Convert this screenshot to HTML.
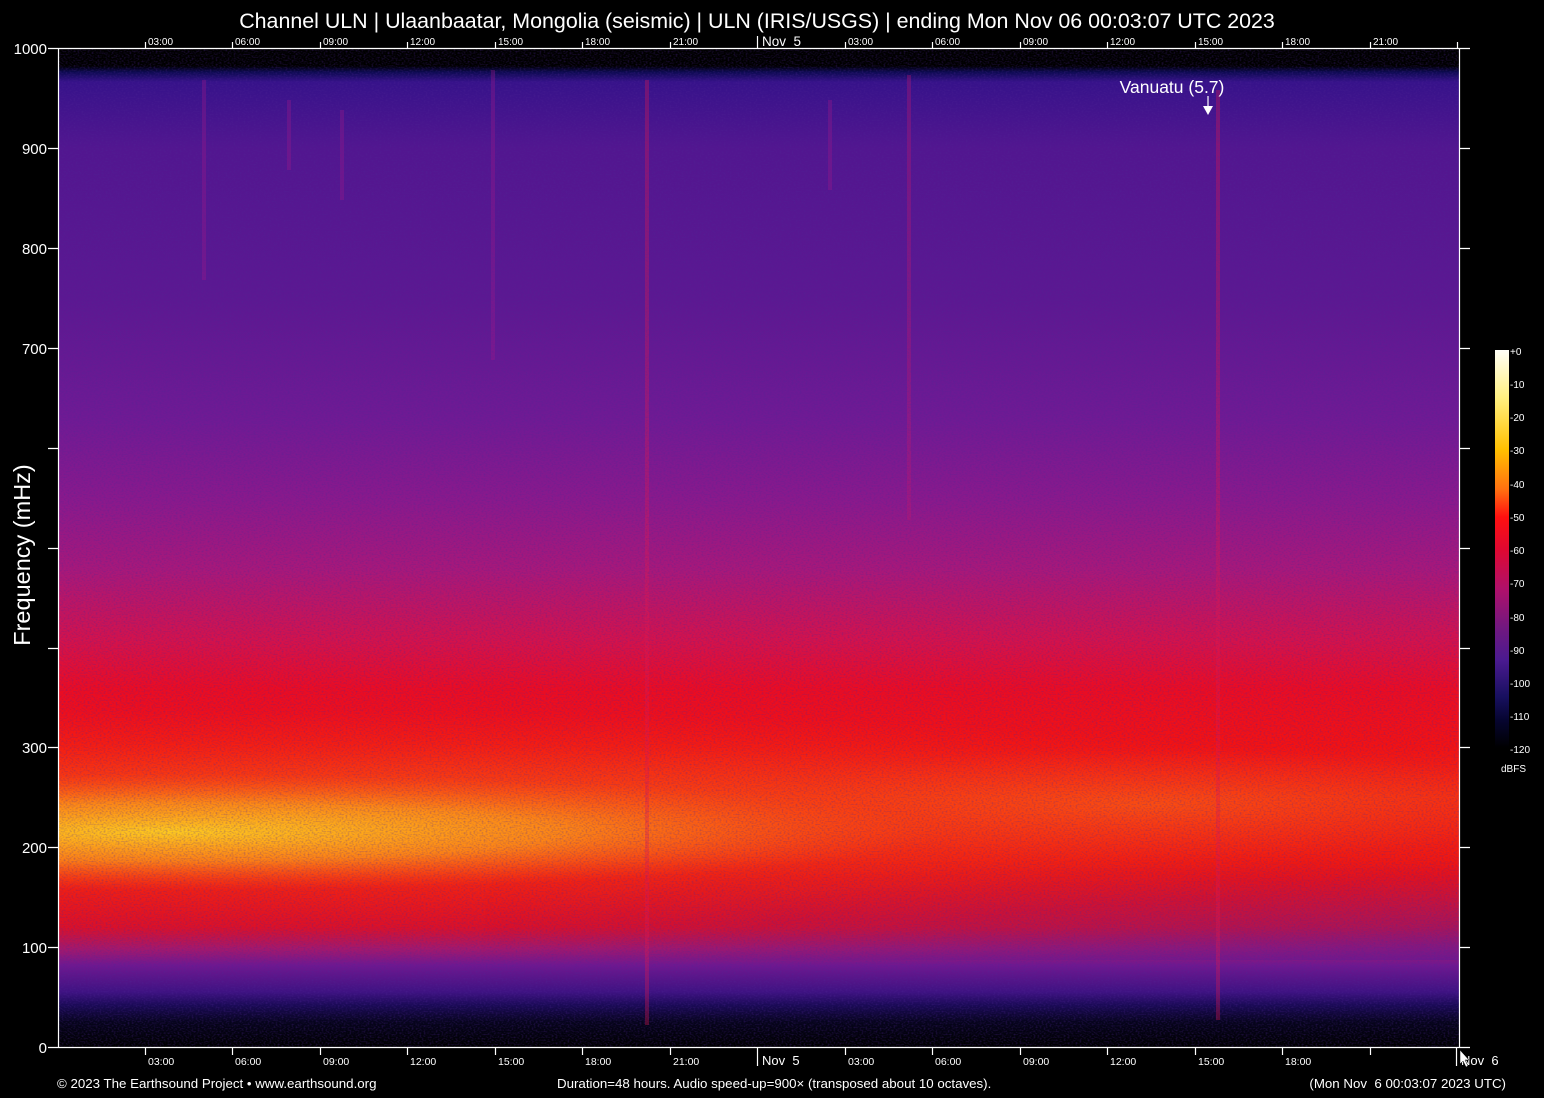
<!DOCTYPE html>
<html><head><meta charset="utf-8"><style>
html,body{margin:0;padding:0;background:#000;width:1544px;height:1098px;overflow:hidden}
svg{display:block}
text{font-family:"Liberation Sans",sans-serif;fill:#fff}
</style></head><body>
<svg width="1544" height="1098" viewBox="0 0 1544 1098" xmlns="http://www.w3.org/2000/svg">
<defs>
<linearGradient id="v" x1="0" y1="48" x2="0" y2="1047" gradientUnits="userSpaceOnUse">
<stop offset="0" stop-color="#000"/>
<stop offset="0.018" stop-color="#000"/>
<stop offset="0.024" stop-color="#0c0a50"/>
<stop offset="0.034" stop-color="#36128a"/>
<stop offset="0.10" stop-color="#521690"/>
<stop offset="0.25" stop-color="#5c1892"/>
<stop offset="0.372" stop-color="#701a94"/>
<stop offset="0.452" stop-color="#8a198c"/>
<stop offset="0.522" stop-color="#a8187a"/>
<stop offset="0.592" stop-color="#d4124c"/>
<stop offset="0.642" stop-color="#ec0c22"/>
<stop offset="0.70" stop-color="#f41212"/>
<stop offset="0.75" stop-color="#f62a10"/>
<stop offset="0.83" stop-color="#f01010"/>
<stop offset="0.88" stop-color="#dc1028"/>
<stop offset="0.902" stop-color="#a4186c"/>
<stop offset="0.918" stop-color="#701890"/>
<stop offset="0.945" stop-color="#3e1282"/>
<stop offset="0.958" stop-color="#1a0a56"/>
<stop offset="0.975" stop-color="#06041c"/>
<stop offset="1" stop-color="#000"/>
</linearGradient>
<radialGradient id="y1" cx="170" cy="832" r="1" gradientUnits="userSpaceOnUse" gradientTransform="translate(170 832) scale(780 58) translate(-170 -832)">
<stop offset="0" stop-color="#ffd020" stop-opacity="0.95"/>
<stop offset="0.5" stop-color="#ffa818" stop-opacity="0.65"/>
<stop offset="1" stop-color="#ff6010" stop-opacity="0"/>
</radialGradient>
<radialGradient id="o1" cx="300" cy="820" r="1" gradientUnits="userSpaceOnUse" gradientTransform="translate(300 820) scale(1300 110) translate(-300 -820)">
<stop offset="0" stop-color="#ff7010" stop-opacity="0.75"/>
<stop offset="1" stop-color="#ff3010" stop-opacity="0"/>
</radialGradient>
<radialGradient id="o2" cx="1150" cy="805" r="1" gradientUnits="userSpaceOnUse" gradientTransform="translate(1150 805) scale(450 55) translate(-1150 -805)">
<stop offset="0" stop-color="#ff6a10" stop-opacity="0.5"/>
<stop offset="1" stop-color="#ff4010" stop-opacity="0"/>
</radialGradient>
<linearGradient id="rb" x1="0" y1="860" x2="0" y2="960" gradientUnits="userSpaceOnUse">
<stop offset="0" stop-color="#7a1a90" stop-opacity="0"/>
<stop offset="1" stop-color="#6a1890" stop-opacity="0.7"/>
</linearGradient>
<linearGradient id="rbh" x1="59" y1="0" x2="1459" y2="0" gradientUnits="userSpaceOnUse">
<stop offset="0.3" stop-color="#fff" stop-opacity="0"/>
<stop offset="1" stop-color="#fff" stop-opacity="1"/>
</linearGradient>
<mask id="m"><rect x="59" y="860" width="1400" height="100" fill="url(#rbh)"/></mask>
<filter id="n" x="0" y="0" width="100%" height="100%">
<feTurbulence type="fractalNoise" baseFrequency="0.5 0.7" numOctaves="1" seed="3"/>
<feColorMatrix values="0 0 0 0 0.08  0 0 0 0 0.02  0 0 0 0 0.3  0 0 0 -2.2 1.25"/>
</filter>
<linearGradient id="cb" x1="0" y1="350" x2="0" y2="748" gradientUnits="userSpaceOnUse">
<stop offset="0" stop-color="#fffff8"/>
<stop offset="0.12" stop-color="#fff080"/>
<stop offset="0.25" stop-color="#ffc000"/>
<stop offset="0.35" stop-color="#ff7010"/>
<stop offset="0.42" stop-color="#ff1010"/>
<stop offset="0.5" stop-color="#e00830"/>
<stop offset="0.6" stop-color="#b0106a"/>
<stop offset="0.7" stop-color="#701880"/>
<stop offset="0.78" stop-color="#4a1a90"/>
<stop offset="0.87" stop-color="#181060"/>
<stop offset="0.93" stop-color="#060530"/>
<stop offset="1" stop-color="#000"/>
</linearGradient>
</defs>

<text x="757" y="28" font-size="21.4" text-anchor="middle">Channel ULN | Ulaanbaatar, Mongolia (seismic) | ULN (IRIS/USGS) | ending Mon Nov 06 00:03:07 UTC 2023</text>

<rect x="59" y="48" width="1400" height="999" fill="url(#v)"/>
<rect x="59" y="48" width="1400" height="999" fill="url(#o1)"/>
<rect x="59" y="48" width="1400" height="999" fill="url(#o2)"/>
<rect x="59" y="48" width="1400" height="999" fill="url(#y1)"/>
<rect x="59" y="860" width="1400" height="100" fill="url(#rb)" mask="url(#m)"/>
<g stroke-width="4" opacity="0.35">
<line x1="647" y1="80" x2="647" y2="1025" stroke="#e01850"/>
<line x1="909" y1="75" x2="909" y2="520" stroke="#c01870"/>
<line x1="1218" y1="90" x2="1218" y2="1020" stroke="#e01850"/>
<line x1="493" y1="70" x2="493" y2="360" stroke="#a0188a"/>
<line x1="204" y1="80" x2="204" y2="280" stroke="#a0188a"/>
<line x1="342" y1="110" x2="342" y2="200" stroke="#a0188a"/>
<line x1="289" y1="100" x2="289" y2="170" stroke="#a0188a"/>
<line x1="830" y1="100" x2="830" y2="190" stroke="#a0188a"/>
</g>
<rect x="59" y="48" width="1400" height="999" filter="url(#n)" opacity="0.4"/>

<g stroke="#fff" stroke-width="1.2" fill="none">
<line x1="58.5" y1="48" x2="58.5" y2="1048"/>
<line x1="58" y1="48.5" x2="1470" y2="48.5"/>
<line x1="58" y1="1047.5" x2="1470" y2="1047.5"/>
<line x1="1459.5" y1="48" x2="1459.5" y2="1048"/>
<path d="M48 48.5h10M48 148.5h10M48 248.5h10M48 348.5h10M48 448.5h10M48 548.5h10M48 648.5h10M48 747.5h10M48 847.5h10M48 947.5h10M48 1047.5h10"/>
<path d="M1460 148.5h10M1460 248.5h10M1460 348.5h10M1460 448.5h10M1460 548.5h10M1460 648.5h10M1460 747.5h10M1460 847.5h10M1460 947.5h10"/>
<path d="M145.5 42v6M232.5 42v6M320.5 42v6M407.5 42v6M495.5 42v6M582.5 42v6M670.5 42v6M757.5 36v12M845.5 42v6M932.5 42v6M1020.5 42v6M1107.5 42v6M1195.5 42v6M1282.5 42v6M1370.5 42v6M1457.5 42v6"/>
<path d="M145.5 1048v7M232.5 1048v7M320.5 1048v7M407.5 1048v7M495.5 1048v7M582.5 1048v7M670.5 1048v7M757.5 1048v18M845.5 1048v7M932.5 1048v7M1020.5 1048v7M1107.5 1048v7M1195.5 1048v7M1282.5 1048v7M1370.5 1048v7M1456.5 1048v18"/>
</g>

<g font-size="15" text-anchor="end">
<text x="47" y="54">1000</text><text x="47" y="154">900</text><text x="47" y="254">800</text><text x="47" y="354">700</text>
<text x="47" y="753">300</text><text x="47" y="853">200</text><text x="47" y="953">100</text><text x="47" y="1053">0</text>
</g>
<text transform="translate(30 555) rotate(-90)" font-size="23.5" text-anchor="middle">Frequency (mHz)</text>

<g font-size="10">
<text x="148" y="45">03:00</text><text x="235" y="45">06:00</text><text x="323" y="45">09:00</text><text x="410" y="45">12:00</text><text x="498" y="45">15:00</text><text x="585" y="45">18:00</text><text x="673" y="45">21:00</text>
<text x="762" y="46" font-size="13.5" xml:space="preserve">Nov  5</text>
<text x="848" y="45">03:00</text><text x="935" y="45">06:00</text><text x="1023" y="45">09:00</text><text x="1110" y="45">12:00</text><text x="1198" y="45">15:00</text><text x="1285" y="45">18:00</text><text x="1373" y="45">21:00</text>
</g>
<g font-size="10.5">
<text x="148" y="1065">03:00</text><text x="235" y="1065">06:00</text><text x="323" y="1065">09:00</text><text x="410" y="1065">12:00</text><text x="498" y="1065">15:00</text><text x="585" y="1065">18:00</text><text x="673" y="1065">21:00</text>
<text x="762" y="1065" font-size="13" xml:space="preserve">Nov  5</text>
<text x="848" y="1065">03:00</text><text x="935" y="1065">06:00</text><text x="1023" y="1065">09:00</text><text x="1110" y="1065">12:00</text><text x="1198" y="1065">15:00</text><text x="1285" y="1065">18:00</text>
<text x="1461" y="1065" font-size="13" xml:space="preserve">Nov  6</text>
</g>
<path d="M1460 1050l0 14 3-3 3 6 2-1-3-6 4 0z" fill="#fff" stroke="#000" stroke-width="0.5"/>

<text x="1172" y="93" font-size="17.5" text-anchor="middle">Vanuatu (5.7)</text>
<line x1="1208" y1="96" x2="1208" y2="108" stroke="#fff" stroke-width="1.2"/>
<path d="M1203 106h10l-5 9z" fill="#fff"/>

<rect x="1495" y="350" width="14" height="398" fill="url(#cb)"/>
<g font-size="10" fill="#ddd">
<text x="1510" y="355">+0</text><text x="1510" y="388">-10</text><text x="1510" y="421">-20</text><text x="1510" y="454">-30</text><text x="1510" y="488">-40</text><text x="1510" y="521">-50</text><text x="1510" y="554">-60</text><text x="1510" y="587">-70</text><text x="1510" y="621">-80</text><text x="1510" y="654">-90</text><text x="1510" y="687">-100</text><text x="1510" y="720">-110</text><text x="1510" y="753">-120</text>
<text x="1501" y="772">dBFS</text>
</g>

<g font-size="13.3">
<text x="57" y="1088">© 2023 The Earthsound Project • www.earthsound.org</text>
<text x="557" y="1088">Duration=48 hours. Audio speed-up=900× (transposed about 10 octaves).</text>
<text x="1506" y="1088" text-anchor="end" xml:space="preserve">(Mon Nov  6 00:03:07 2023 UTC)</text>
</g>
</svg>
</body></html>
